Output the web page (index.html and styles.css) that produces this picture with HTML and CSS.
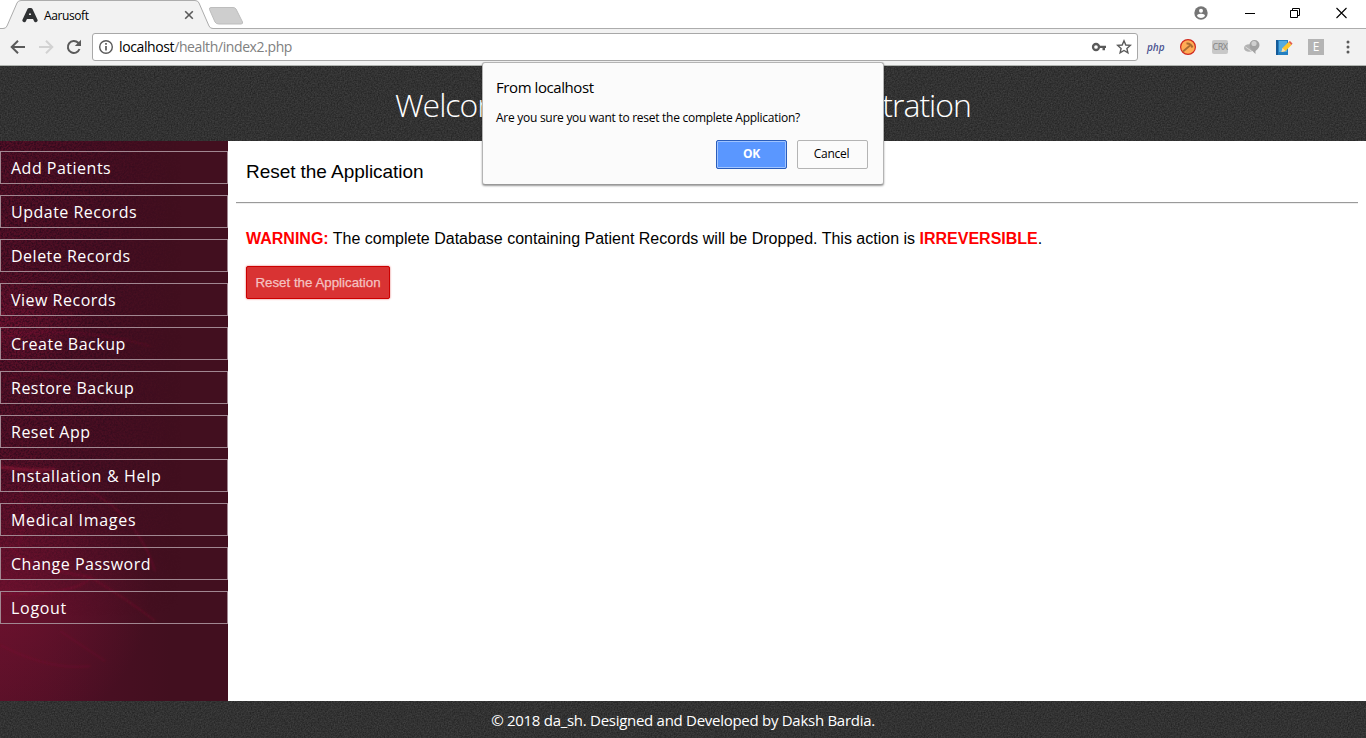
FILE: index.html
```html
<!DOCTYPE html>
<html lang="en">
<head>
<meta charset="utf-8">
<title>Aarusoft</title>
<link rel="stylesheet" href="styles.css">
</head>
<body>
<div class="window">
  <div class="browser">
    <div class="tabstrip">
      <svg class="tabshape" width="250" height="29" viewBox="0 0 250 29">
        <path d="M0 28.5H3Q6 28.5 7 26L17 3Q18 .5 21 .5H195Q198 .5 199 3L209 26Q210 28.5 213 28.5H250V29H0z" fill="#f2f2f2"/>
        <path d="M0 28.5H3Q6 28.5 7 26L17 3Q18 .5 21 .5H195Q198 .5 199 3L209 26Q210 28.5 213 28.5H250" fill="none" stroke="#acacac"/>
        <path d="M211 7.5H233Q235 7.5 236 9L242.500 22Q243 24 241 24H219Q216 24 215 22L209.500 9.500Q209 7.500 211 7.500z" fill="#cecece" stroke="#bdbdbd"/>
      </svg>
      <div class="tab">
        <svg width="16" height="16" viewBox="0 0 16 16"><path d="M2.300 13.300L7.200 2.800H8.800L13.700 13.300M4.500 10H11.500" fill="none" stroke="#2f3133" stroke-width="3.800" stroke-linecap="round" stroke-linejoin="round"/></svg>
        <span class="tabtitle">Aarusoft</span>
        <svg width="10" height="10" viewBox="0 0 10 10"><path d="M1.200 1.200L8.800 8.800M8.800 1.200L1.200 8.800" stroke="#5a5a5a" stroke-width="1.600"/></svg>
      </div>
      <div class="winbuttons">
        <svg width="14" height="14" viewBox="0 0 14 14"><circle cx="7" cy="7" r="6.700" fill="#757575"/><circle cx="7" cy="4.700" r="2" fill="#fff"/><path d="M3 10Q3.200 7.800 7 7.800T11 10Q9.500 12 7 12T3 10z" fill="#fff"/></svg>
        <svg class="minimize" width="10" height="12" viewBox="0 0 10 12"><path d="M0 6.500H10" stroke="#000"/></svg>
        <svg width="11" height="12" viewBox="0 0 11 12"><path d="M.5 3.500H7.500V10.500H.5zM2.500 3.500V1.500H9.500V8.500H7.500" fill="none" stroke="#000"/></svg>
        <svg width="11" height="12" viewBox="0 0 11 12"><path d="M.5 1L10.500 11M10.500 1L.5 11" stroke="#000" stroke-width="1.100"/></svg>
      </div>
    </div>
    <div class="toolbar">
      <div class="nav">
        <svg width="16" height="16" viewBox="0 0 16 16"><path d="M15 8H2.500M8 1.700L1.700 8L8 14.300" fill="none" stroke="#5a5a5a" stroke-width="2"/></svg>
        <svg width="16" height="16" viewBox="0 0 16 16"><path d="M1 8H13.500M8 1.700L14.300 8L8 14.300" fill="none" stroke="#d2d2d2" stroke-width="2"/></svg>
        <svg width="16" height="16" viewBox="0 0 16 16"><path d="M13.500 10A6 6 0 1 1 12.200 3.800L13 4.800" fill="none" stroke="#5a5a5a" stroke-width="2"/><path d="M15 .8V7H8.800z" fill="#5a5a5a"/></svg>
      </div>
      <div class="omnibox">
        <svg width="16" height="16" viewBox="0 0 16 16"><circle cx="8" cy="8" r="6.300" fill="none" stroke="#5a5a5a" stroke-width="1.400"/><path d="M8 7V11.500M8 4V5.700" stroke="#5a5a5a" stroke-width="1.700"/></svg>
        <span class="url"><b>localhost</b>/health/index2.php</span>
        <svg class="key" width="16" height="12" viewBox="0 0 16 12"><circle cx="5" cy="6" r="3" fill="none" stroke="#5a5a5a" stroke-width="2.300"/><path d="M8 4.800H15V7H14V9.200H11.500V7H8z" fill="#5a5a5a"/></svg>
        <svg width="16" height="16" viewBox="0 0 16 16"><path d="M8 1.800L9.800 6L14.300 6.400L10.900 9.400L11.900 13.900L8 11.500L4.100 13.900L5.100 9.400L1.700 6.400L6.200 6z" fill="none" stroke="#5a5a5a" stroke-width="1.400"/></svg>
      </div>
      <div class="extensions">
        <span class="php">php</span>
        <svg width="16" height="16" viewBox="0 0 16 16"><circle cx="8" cy="8" r="7.400" fill="#ffab55" stroke="#d0281f" stroke-width="1.200"/><path d="M3 12.500L10 6.500" stroke="#a96a32" stroke-width="1.700"/><path d="M6.500 4.500Q10.500 4 12.500 8.500" fill="none" stroke="#a96a32" stroke-width="2"/></svg>
        <span class="crx">CRX</span>
        <svg width="16" height="16" viewBox="0 0 16 16"><ellipse cx="5" cy="9" rx="5" ry="3.800" fill="#b3b3b3"/><path d="M1.500 8L8 12.500" stroke="#ddd"/><path d="M5.500 6A5 5 0 0 1 15.500 6Q15.500 9 11.500 12V15L8 11.500Q5.500 9 5.500 6z" fill="#a2a2a2"/><circle cx="10" cy="4.500" r="2.600" fill="#cfcfcf"/></svg>
        <svg width="17" height="17" viewBox="0 0 17 17"><path d="M0 1H12V16H0z" fill="#237fc1"/><path d="M3 2H11V13H3z" fill="#54abe0"/><path d="M0 1H2V16H0z" fill="#165b98"/><path d="M5.500 13L6.500 9L12.500 3L15.500 6L9.500 12z" fill="#ffc52a"/><path d="M12.500 3L14 2L16.500 4.500L15.500 6z" fill="#e35b49"/><path d="M5.500 13L6.500 9L9.500 12z" fill="#f5dfb8"/></svg>
        <span class="ext-e">E</span>
        <svg class="menu" width="4" height="14" viewBox="0 0 4 14"><g fill="#5a5a5a"><circle cx="2" cy="2" r="1.500"/><circle cx="2" cy="7" r="1.500"/><circle cx="2" cy="12" r="1.500"/></g></svg>
      </div>
    </div>
  </div>

  <header class="banner">
    <svg class="grain" width="1366" height="75"><filter id="gray" x="0" y="0" width="1" height="1" color-interpolation-filters="sRGB"><feTurbulence type="fractalNoise" baseFrequency=".7" numOctaves="2"/><feColorMatrix values=".17 0 0 0 .112 .17 0 0 0 .112 .17 0 0 0 .112 0 0 0 0 1"/></filter><rect width="1366" height="75" filter="url(#gray)"/></svg>
    <h1><span>Welcome</span><span>Administration</span></h1>
  </header>

  <main class="content">
    <nav class="sidebar">
      <svg class="backdrop" width="228" height="560" viewBox="0 0 228 560">
        <defs>
          <linearGradient id="shade"><stop offset="0" stop-color="#561027"/><stop offset=".4" stop-color="#4a0f23"/><stop offset=".75" stop-color="#420f1f"/><stop offset="1" stop-color="#420f1f"/></linearGradient>
          <radialGradient id="glow"><stop offset="0" stop-color="#7d1233" stop-opacity=".6"/><stop offset="1" stop-color="#7d1233" stop-opacity="0"/></radialGradient>
          <linearGradient id="fade"><stop offset="0" stop-color="#fff"/><stop offset=".45" stop-color="#aaa"/><stop offset=".8" stop-color="#000"/></linearGradient>
          <linearGradient id="down" x2="0" y2="1"><stop offset="0" stop-color="#fff"/><stop offset=".6" stop-color="#ddd"/><stop offset=".85" stop-color="#000"/></linearGradient>
          <mask id="left"><rect width="228" height="560" fill="url(#fade)"/></mask>
          <mask id="upper"><rect width="228" height="560" fill="url(#down)"/></mask>
          <filter id="speck" color-interpolation-filters="sRGB"><feTurbulence type="fractalNoise" baseFrequency=".55" numOctaves="2"/><feColorMatrix values="0 0 0 0 .13 0 0 0 0 .03 0 0 0 0 .1 2.600 0 0 0 -.95"/></filter>
          <filter id="soft"><feGaussianBlur stdDeviation=".8"/></filter>
        </defs>
        <rect width="228" height="560" fill="url(#shade)"/>
        <ellipse cx="0" cy="180" rx="90" ry="55" fill="url(#glow)"/>
        <ellipse cx="0" cy="450" rx="150" ry="150" fill="url(#glow)"/>
        <g mask="url(#upper)"><rect width="228" height="560" filter="url(#speck)" mask="url(#left)" opacity=".75"/></g>
        <g fill="none" stroke="#a51b3c" filter="url(#soft)">
          <path d="M0 326Q60 330 100 356Q140 382 155 430" stroke-width="1.200" opacity=".4"/>
          <path d="M0 326Q30 330 55 328" stroke-width="2.500" opacity=".5"/>
          <path d="M10 405Q20 425 90 436Q130 460 155 480M0 453Q70 455 90 438" stroke-width="1" opacity=".5"/>
          <path d="M0 196Q70 183 150 205M0 504Q50 530 90 525M60 490Q90 510 105 520M15 340Q30 365 18 410M0 240Q50 220 100 260" opacity=".3"/>
        </g>
      </svg>
      <a>Add Patients</a><a>Update Records</a><a>Delete Records</a><a>View Records</a><a>Create Backup</a><a>Restore Backup</a><a>Reset App</a><a class="roomy">Installation &amp; Help</a><a class="roomy">Medical Images</a><a>Change Password</a><a class="roomy">Logout</a>
    </nav>
    <section class="panel">
      <h2>Reset the Application</h2>
      <hr>
      <p><strong>WARNING:</strong> The complete Database containing Patient Records will be Dropped. This action is <strong>IRREVERSIBLE</strong>.</p>
      <button class="reset">Reset the Application</button>
    </section>
  </main>

  <footer class="footer">
    <svg class="grain" width="1366" height="37"><rect width="1366" height="37" filter="url(#gray)"/></svg>
    <span class="credit">© 2018 da_sh. Designed and Developed by Daksh Bardia.</span>
  </footer>

  <div class="dialog">
    <div class="dialog-title">From localhost</div>
    <div class="dialog-text">Are you sure you want to reset the complete Application?</div>
    <div class="dialog-actions"><button class="ok">OK</button><button class="cancel">Cancel</button></div>
  </div>
</div>
</body>
</html>
```
FILE: styles.css
```css
* { box-sizing: border-box; }
body { margin: 0; background: #fff; font-family: "Liberation Sans", Arial, sans-serif; overflow: hidden; }
svg { display: block; flex: none; }
.window { position: relative; width: 1366px; height: 738px; display: flex; flex-direction: column; }
.browser { height: 66px; font-family: "Open Sans", sans-serif; background: #f2f2f2; border-bottom: 1px solid #b0b4b0; }
.tabstrip { position: relative; height: 29px; background: #fff; border-bottom: 1px solid #acacac; display: flex; justify-content: space-between; }
.tabshape { position: absolute; left: 0; top: 0; }
.tab { position: relative; display: flex; align-items: center; width: 194px; padding-left: 22px; height: 30px; }
.tabtitle { flex: 1; margin-left: 6px; font-size: 12px; letter-spacing: -.4px; }
.winbuttons { display: flex; align-items: center; gap: 35px; padding: 0 19px 2px 0; height: 28px; }
.minimize { margin-left: 2px; }
.toolbar { display: flex; align-items: center; height: 36px; }
.nav { display: flex; gap: 12px; width: 92px; padding-left: 10px; }
.omnibox { width: 1046px; height: 28px; border: 1px solid #a8a8a8; border-radius: 3px; background: #fff; display: flex; align-items: center; padding: 0 5px; }
.url { flex: 1; margin-left: 5px; color: #808080; font-size: 14px; line-height: 19px; padding-bottom: 1px; letter-spacing: -.39px; }
.url b { color: #000; font-weight: 400; }
.key { margin-right: 9px; }
.extensions { flex: 1; display: flex; align-items: center; gap: 16px; padding-left: 10px; }
.php { width: 16px; font: italic 600 10px/14px "Open Sans", sans-serif; color: #4b5390; margin-left: -1px; margin-right: 1px; }
.crx { width: 16px; height: 14px; background: #c8c8c8; border-radius: 2px; color: #858585; font: 9px/14px "Open Sans", sans-serif; display: flex; justify-content: center; letter-spacing: -.5px; }
.ext-e { width: 16px; height: 16px; background: #b4b4b4; color: #fff; font: 12px/16px "Open Sans", sans-serif; text-align: center; margin-left: -1px; }
.menu { margin-left: 6px; }
.banner { position: relative; height: 75px; background: #333; color: #fff; display: flex; justify-content: center; }
.grain { position: absolute; left: 0; top: 0; }
h1 { position: relative; width: 576px; margin: 0; display: flex; justify-content: space-between; font: 300 32px/78px "Open Sans", sans-serif; letter-spacing: -1px; }
.content { height: 560px; display: flex; }
.sidebar { position: relative; width: 228px; padding-top: 10px; display: flex; flex-direction: column; gap: 11px; background: #420f1f; }
.backdrop { position: absolute; left: 0; top: 0; }
.sidebar a { position: relative; height: 33px; border: 1px solid #a18791; padding-left: 10px; color: #fff; font: 16px/33px "Open Sans", sans-serif; letter-spacing: .5px; }
.sidebar .roomy { letter-spacing: .7px; }
.panel { flex: 1; padding: 0 8px; }
h2 { margin: 0; padding: 20px 10px 0; height: 61px; font-size: 19px; line-height: 22px; font-weight: 400; letter-spacing: -.05px; }
hr { margin: 0; border: 0; height: 2px; border-top: 1px solid #9a9a9a; border-bottom: 1px solid #eee; }
.panel p { margin: 26px 10px 18px; font-size: 16px; line-height: 18px; }
.panel strong { color: #f00; }
.reset { margin-left: 10px; width: 144px; height: 33px; padding: 0; border: 1px solid #cc0000; border-radius: 2px; background: #d93333; color: #f4c2c2; font: 13.33px "Liberation Sans", sans-serif; -webkit-text-stroke: .25px #f4c2c2; box-shadow: 0 0 2px #d55; white-space: nowrap; }
.footer { position: relative; height: 37px; background: #333; text-align: center; color: #fff; }
.credit { position: relative; font: 15px/39px "Open Sans", sans-serif; letter-spacing: -.28px; }
.dialog { position: absolute; left: 482px; top: 62px; width: 402px; height: 123px; border: 1px solid #b4b4b4; border-bottom-color: #999; border-radius: 3px; background: #fbfbfb; box-shadow: 0 1px 2px rgba(0,0,0,.4); padding: 13px 15px 0 13px; font-family: "Open Sans", sans-serif; }
.dialog-title { font-size: 15px; line-height: 22px; letter-spacing: -.42px; }
.dialog-text { margin-top: 12px; font-size: 12px; line-height: 16px; letter-spacing: -.27px; white-space: nowrap; }
.dialog-actions { margin-top: 14px; display: flex; justify-content: flex-end; gap: 10px; }
.dialog button { width: 71px; height: 29px; padding: 0 2px 2px 0; border-radius: 2px; font: 12px "Open Sans", sans-serif; letter-spacing: -.3px; }
.dialog .ok { background: #5a97ff; color: #fff; border: 1px solid #2a5dbb; box-shadow: inset 0 0 0 1px #a0c4ff; font-weight: 700; padding-right: 0; }
.dialog .cancel { background: #fbfbfb; border: 1px solid #b4b4b4; color: #000; }
```
